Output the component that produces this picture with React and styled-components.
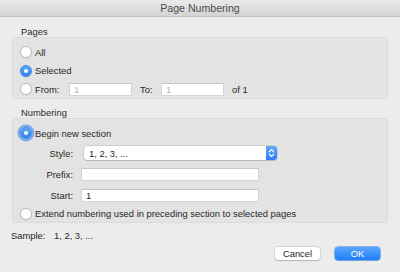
import styled, { createGlobalStyle } from "styled-components";

const GlobalStyle = createGlobalStyle`
  html, body {
    margin: 0;
    padding: 0;
    background: #ececec;
  }
  body {
    font-family: "Liberation Sans", Arial, sans-serif;
    font-size: 9.4px;
    color: #262626;
  }
`;

const Window = styled.div`
  width: 400px;
  height: 272px;
  display: flex;
  flex-direction: column;
  background: #ececec;
  box-sizing: border-box;
  overflow: hidden;
`;

const TitleBar = styled.div`
  height: 16px;
  flex: none;
  display: flex;
  align-items: center;
  justify-content: center;
  background: linear-gradient(#e9e9e9, #d4d4d4);
  border-bottom: 1px solid #c2c2c2;
  font-size: 10.6px;
  color: #4b4b4b;
`;

const Content = styled.div`
  display: flex;
  flex-direction: column;
  padding: 0 12px 0 12px;
`;

const SectionLabel = styled.div`
  height: 11px;
  line-height: 11px;
  margin-top: ${(p) => p.$top}px;
  padding-left: 9px;
  color: #2a2a2a;
`;

const Group = styled.div`
  display: flex;
  flex-direction: column;
  background: #e3e3e3;
  border: 1px solid #dcdcdc;
  border-radius: 4px;
  padding: ${(p) => p.$pad};
`;

const Row = styled.div`
  height: ${(p) => p.$h}px;
  display: flex;
  align-items: center;
  padding-left: 7px;
  gap: 3px;
`;

const FieldRow = styled.div`
  height: ${(p) => p.$h}px;
  display: flex;
  align-items: center;
  gap: 8px;
`;

const FieldLabel = styled.div`
  width: 60px;
  text-align: right;
`;

const Radio = styled.span`
  width: 12px;
  height: 12px;
  box-sizing: border-box;
  border-radius: 50%;
  flex: none;
  display: flex;
  align-items: center;
  justify-content: center;
  background: ${(p) => (p.$on ? "linear-gradient(#5ba6fb, #2f82f6)" : "#fff")};
  border: 1px solid ${(p) => (p.$on ? "#3a85ee" : "#bdbdbd")};
  box-shadow: ${(p) =>
    p.$focus
      ? "0 0 0 2.5px rgba(88, 148, 236, 0.75)"
      : "0 0.5px 1px rgba(0,0,0,0.12)"};
  &::after {
    content: "";
    display: ${(p) => (p.$on ? "block" : "none")};
    width: 4px;
    height: 4px;
    border-radius: 50%;
    background: #fff;
  }
`;

const Label = styled.span`
  width: ${(p) => (p.$w ? `${p.$w}px` : "auto")};
  flex: none;
`;

const TextBox = styled.div`
  width: ${(p) => p.$w}px;
  height: 13px;
  box-sizing: border-box;
  background: #fff;
  border: 1px solid #d4d4d4;
  border-top-color: #c6c6c6;
  padding-left: 4px;
  display: flex;
  align-items: center;
  color: ${(p) => (p.$dim ? "#b4b4b4" : "#222")};
  margin-right: ${(p) => p.$mr || 0}px;
  flex: none;
`;

const Select = styled.div`
  width: 193px;
  height: 14px;
  margin-left: 3px;
  box-sizing: border-box;
  background: #fff;
  border-radius: 3px;
  box-shadow: 0 0 0 0.5px rgba(0,0,0,0.18), 0 1px 1px rgba(0,0,0,0.12);
  display: flex;
  align-items: center;
  justify-content: space-between;
  padding-left: 5px;
  overflow: hidden;
`;

const Stepper = styled.div`
  width: 11px;
  height: 14px;
  background: linear-gradient(#5ea8fc, #2a7ff6);
  display: flex;
  align-items: center;
  justify-content: center;
`;

const Footer = styled.div`
  height: 14px;
  margin-top: 5px;
  display: flex;
  align-items: center;
  margin-left: -1px;
`;

const Buttons = styled.div`
  display: flex;
  justify-content: flex-end;
  gap: 15px;
  margin-top: 5px;
  padding-right: 8px;
`;

const Button = styled.div`
  width: 45px;
  height: 13px;
  border-radius: 3px;
  display: flex;
  align-items: center;
  justify-content: center;
  box-sizing: border-box;
  color: ${(p) => (p.$primary ? "#fff" : "#262626")};
  background: ${(p) =>
    p.$primary ? "linear-gradient(#5aa6fc, #1f7ef8)" : "#fff"};
  box-shadow: ${(p) =>
    p.$primary
      ? "0 0 0 0.5px #2a78e6, 0 1px 1px rgba(0,0,0,0.15)"
      : "0 0 0 0.5px rgba(0,0,0,0.2), 0 1px 1px rgba(0,0,0,0.15)"};
`;

export default function App() {
  return (
    <>
      <GlobalStyle />
      <Window>
        <TitleBar>Page Numbering</TitleBar>
        <Content>
          <SectionLabel $top={9}>Pages</SectionLabel>
          <Group $pad="5px 0 0 0">
            <Row $h={18}>
              <Radio />
              <Label>All</Label>
            </Row>
            <Row $h={19}>
              <Radio $on />
              <Label>Selected</Label>
            </Row>
            <Row $h={18}>
              <Radio />
              <Label $w={31}>From:</Label>
              <TextBox $w={63} $dim $mr={5}>1</TextBox>
              <Label $w={18}>To:</Label>
              <TextBox $w={63} $dim $mr={5}>1</TextBox>
              <Label>of 1</Label>
            </Row>
          </Group>

          <SectionLabel $top={8}>Numbering</SectionLabel>
          <Group $pad="5px 0 0 0">
            <Row $h={18}>
              <Radio $on $focus />
              <Label>Begin new section</Label>
            </Row>
            <FieldRow $h={22}>
              <FieldLabel>Style:</FieldLabel>
              <Select>
                <span>1, 2, 3, ...</span>
                <Stepper>
                  <svg width="7" height="10" viewBox="0 0 7 10">
                    <path
                      d="M1.2 3.8 L3.5 1.5 L5.8 3.8 M1.2 6.2 L3.5 8.5 L5.8 6.2"
                      fill="none"
                      stroke="#fff"
                      strokeWidth="1.1"
                      strokeLinecap="round"
                      strokeLinejoin="round"
                    />
                  </svg>
                </Stepper>
              </Select>
            </FieldRow>
            <FieldRow $h={21}>
              <FieldLabel>Prefix:</FieldLabel>
              <TextBox $w={178} />
            </FieldRow>
            <FieldRow $h={20}>
              <FieldLabel>Start:</FieldLabel>
              <TextBox $w={178}>1</TextBox>
            </FieldRow>
            <Row $h={17}>
              <Radio />
              <Label>Extend numbering used in preceding section to selected pages</Label>
            </Row>
          </Group>

          <Footer>
            <Label $w={43}>Sample:</Label>
            <Label>1, 2, 3, ...</Label>
          </Footer>
          <Buttons>
            <Button>Cancel</Button>
            <Button $primary>OK</Button>
          </Buttons>
        </Content>
      </Window>
    </>
  );
}
